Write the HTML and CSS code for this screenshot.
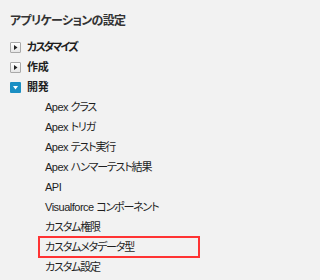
FILE: index.html
```html
<!DOCTYPE html>
<html lang="ja">
<head>
<meta charset="utf-8">
<link rel="stylesheet" href="styles.css">
</head>
<body>
<div class="panel">
  <h2 class="title">アプリケーションの設定</h2>
  <ul class="tree">
    <li class="node">
      <div class="node-row"><span class="toggle closed"><svg viewBox="0 0 11 11" width="11" height="11"><path d="M4 3 L7.5 5.5 L4 8 Z" fill="#222"/></svg></span><span class="label kana">カスタマイズ</span></div>
    </li>
    <li class="node">
      <div class="node-row"><span class="toggle closed"><svg viewBox="0 0 11 11" width="11" height="11"><path d="M4 3 L7.5 5.5 L4 8 Z" fill="#222"/></svg></span><span class="label">作成</span></div>
    </li>
    <li class="node">
      <div class="node-row"><span class="toggle open"><svg viewBox="0 0 11 11" width="11" height="11"><path d="M3 4 L8 4 L5.5 7.5 Z" fill="#fff"/></svg></span><span class="label">開発</span></div>
      <ul class="children">
        <li class="leaf">Apex <span class="jp">クラス</span></li>
        <li class="leaf">Apex <span class="jp">トリガ</span></li>
        <li class="leaf">Apex <span class="jp">テスト実行</span></li>
        <li class="leaf">Apex <span class="jp">ハンマーテスト結果</span></li>
        <li class="leaf">API</li>
        <li class="leaf">Visualforce <span class="jp">コンポーネント</span></li>
        <li class="leaf"><span class="jp">カスタム権限</span></li>
        <li class="leaf highlight"><span class="jp">カスタムメタデータ型</span></li>
        <li class="leaf"><span class="jp">カスタム設定</span></li>
      </ul>
    </li>
  </ul>
</div>
</body>
</html>
```

FILE: styles.css
```css
html, body {
  margin: 0;
  padding: 0;
  background: #f2f2f2;
}
body {
  font-family: "Liberation Sans", "Noto Sans CJK JP", sans-serif;
  color: #1e1e1e;
  font-feature-settings: "palt";
}
.panel {
  padding: 13px 0 0 10px;
}
.title {
  margin: 0;
  font-size: 12px;
  line-height: 16px;
  font-weight: bold;
  letter-spacing: -0.7px;
  color: #333;
}
.tree, .children {
  list-style: none;
  margin: 0;
  padding: 0;
}
.tree {
  margin-top: 8px;
}
.node-row {
  display: flex;
  align-items: center;
  gap: 6px;
  height: 20px;
}
.toggle {
  width: 11px;
  height: 11px;
  box-sizing: border-box;
  display: flex;
  border-radius: 1px;
}
.toggle svg { display: block; }
.toggle.closed {
  border: 1px solid #a9a9a9;
  background: linear-gradient(#ffffff, #e6e6e6);
}
.toggle.closed svg { margin: -1px; }
.toggle.open {
  background: #1b8fc3;
}
.label {
  font-size: 11px;
  font-weight: bold;
  letter-spacing: -0.2px;
  line-height: 20px;
}
.label.kana {
  letter-spacing: -1.8px;
}
.children {
  padding-left: 35px;
}
.leaf {
  font-size: 11px;
  letter-spacing: -0.5px;
  line-height: 20px;
  height: 20px;
  white-space: nowrap;
}
.leaf .jp {
  letter-spacing: -1.2px;
}
.leaf.highlight {
  box-sizing: border-box;
  width: 162px;
  height: 22px;
  line-height: 18px;
  margin: -1px 0 -1px -7px;
  padding-left: 5px;
  border: 2px solid #ff3333;
}
```
